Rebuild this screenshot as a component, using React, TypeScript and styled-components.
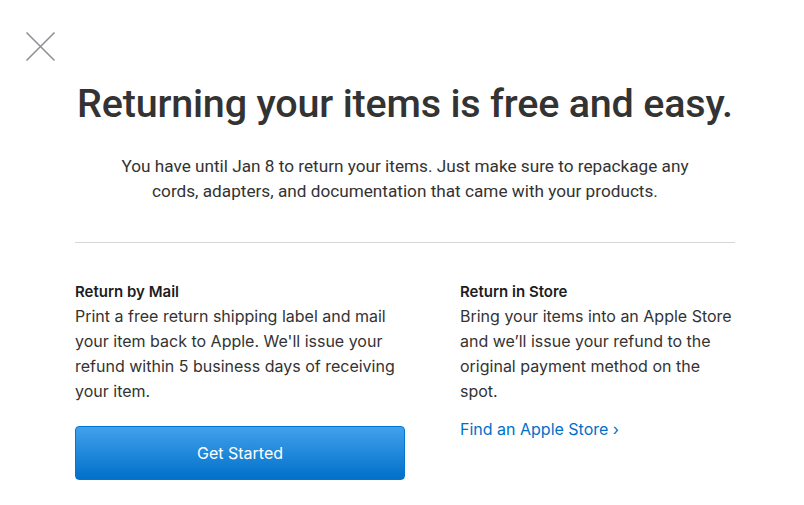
import styled, { createGlobalStyle } from "styled-components";

const Global = createGlobalStyle`
  html, body { margin: 0; padding: 0; background: #fff; }
  body { font-family: Inter, "Liberation Sans", sans-serif; color: #333; }
`;

const Page = styled.div`
  position: relative;
  width: 804px;
  height: 505px;
  box-sizing: border-box;
  padding: 76px 69px 0 75px;
`;

const Close = styled.button`
  position: absolute;
  left: 25px;
  top: 31px;
  width: 31px;
  height: 31px;
  padding: 0;
  border: 0;
  background: none;
  cursor: pointer;
`;

const Title = styled.h1`
  margin: 0;
  text-align: center;
  font-family: Roboto, "Liberation Sans", sans-serif;
  font-weight: 500;
  font-size: 39.5px;
  line-height: 56px;
  color: #333;
  letter-spacing: -0.2px;
`;

const Lead = styled.p`
  margin: 22px auto 0;
  max-width: 590px;
  text-align: center;
  font-family: Roboto, "Liberation Sans", sans-serif;
  font-size: 17.2px;
  line-height: 25px;
  color: #333;
`;

const Divider = styled.hr`
  margin: 38px 0 0;
  border: 0;
  border-top: 1px solid #d6d6d6;
`;

const Columns = styled.div`
  display: grid;
  grid-template-columns: 330px 280px;
  column-gap: 55px;
  margin-top: 36px;
`;

const Column = styled.div`
  display: flex;
  flex-direction: column;
  align-items: flex-start;
`;

const ColTitle = styled.h2`
  margin: 0;
  font-size: 15px;
  font-weight: 600;
  line-height: 25px;
  color: #1d1d1f;
`;

const Body = styled.p`
  margin: 0;
  font-size: 16px;
  line-height: 25px;
  color: #333;
`;

const Button = styled.button`
  margin-top: 22px;
  width: 330px;
  height: 54px;
  border: 1px solid #0077d4;
  border-radius: 4px;
  background: linear-gradient(#42a1ec, #0070c9);
  color: #fff;
  font-family: Inter, "Liberation Sans", sans-serif;
  font-size: 16px;
  cursor: pointer;
`;

const Link = styled.a`
  margin-top: 13px;
  font-size: 16px;
  line-height: 25px;
  color: #0070c9;
  text-decoration: none;
`;

export default function App() {
  return (
    <Page>
      <Global />
      <Close aria-label="Close">
        <svg width="31" height="31" viewBox="0 0 31 31">
          <path d="M1.5 1.5 L29.5 29.5 M29.5 1.5 L1.5 29.5" stroke="#8d9196" strokeWidth="1.6" fill="none" />
        </svg>
      </Close>
      <Title>Returning your items is free and easy.</Title>
      <Lead>
        You have until Jan 8 to return your items. Just make sure to repackage any cords,
        adapters, and documentation that came with your products.
      </Lead>
      <Divider />
      <Columns>
        <Column>
          <ColTitle>Return by Mail</ColTitle>
          <Body>
            Print a free return shipping label and mail your item back to Apple. We'll issue
            your refund within 5 business days of receiving your item.
          </Body>
          <Button>Get Started</Button>
        </Column>
        <Column>
          <ColTitle>Return in Store</ColTitle>
          <Body>
            Bring your items into an Apple Store and we’ll issue your refund to the original
            payment method on the spot.
          </Body>
          <Link href="#">Find an Apple Store ›</Link>
        </Column>
      </Columns>
    </Page>
  );
}
